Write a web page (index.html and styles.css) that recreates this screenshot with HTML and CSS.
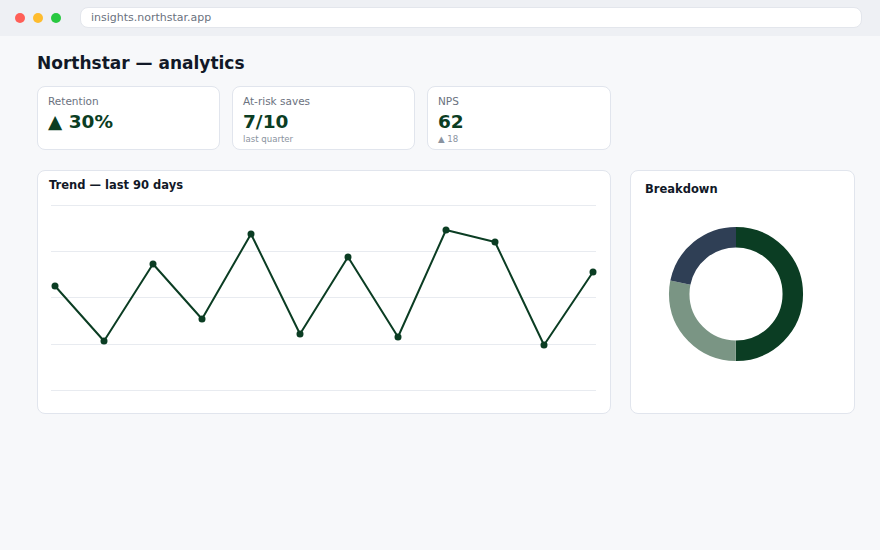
FILE: index.html
```html
<!DOCTYPE html>
<html lang="en">
<head>
    <meta charset="UTF-8">
    <title>Northstar — analytics</title>
    <link rel="stylesheet" href="styles.css">
</head>
<body>
    <div class="chrome">
        <span class="dot red"></span>
        <span class="dot amber"></span>
        <span class="dot green"></span>
        <div class="url">insights.northstar.app</div>
    </div>

    <div class="page">
        <h1>Northstar — analytics</h1>

        <div class="kpis">
            <div class="card kpi">
                <div class="label">Retention</div>
                <div class="value">▲ 30%</div>
            </div>
            <div class="card kpi">
                <div class="label">At-risk saves</div>
                <div class="value">7/10</div>
                <div class="sub">last quarter</div>
            </div>
            <div class="card kpi">
                <div class="label">NPS</div>
                <div class="value">62</div>
                <div class="sub">▲ 18</div>
            </div>
        </div>

        <div class="panels">
            <div class="card trend">
                <h3>Trend — last 90 days</h3>
                <svg class="chart" width="572" height="212" viewBox="0 0 572 212">
                    <g stroke="#e8ebf0" stroke-width="1">
                        <line x1="13" y1="12.5" x2="558" y2="12.5"/>
                        <line x1="13" y1="58.5" x2="558" y2="58.5"/>
                        <line x1="13" y1="104.5" x2="558" y2="104.5"/>
                        <line x1="13" y1="151.5" x2="558" y2="151.5"/>
                        <line x1="13" y1="197.5" x2="558" y2="197.5"/>
                    </g>
                    <polyline fill="none" stroke="#0b3d23" stroke-width="2" stroke-linejoin="round"
                        points="17,93 66,148 115,71 164,126 213,41 262,141 310,64 360,144 408,37 457,49 506,152 555,79"/>
                    <g fill="#0b3d23">
                        <circle cx="17" cy="93" r="3.5"/>
                        <circle cx="66" cy="148" r="3.5"/>
                        <circle cx="115" cy="71" r="3.5"/>
                        <circle cx="164" cy="126" r="3.5"/>
                        <circle cx="213" cy="41" r="3.5"/>
                        <circle cx="262" cy="141" r="3.5"/>
                        <circle cx="310" cy="64" r="3.5"/>
                        <circle cx="360" cy="144" r="3.5"/>
                        <circle cx="408" cy="37" r="3.5"/>
                        <circle cx="457" cy="49" r="3.5"/>
                        <circle cx="506" cy="152" r="3.5"/>
                        <circle cx="555" cy="79" r="3.5"/>
                    </g>
                </svg>
            </div>

            <div class="card breakdown">
                <h3>Breakdown</h3>
                <svg class="donut" width="182" height="182" viewBox="0 0 182 182">
                    <g transform="rotate(-90 91 91)" fill="none" stroke-width="20.5">
                        <circle cx="91" cy="91" r="56.8" stroke="#0b3d23" stroke-dasharray="178.44 356.88"/>
                        <circle cx="91" cy="91" r="56.8" stroke="#7a9584" stroke-dasharray="100.3 356.88" stroke-dashoffset="-178.44"/>
                        <circle cx="91" cy="91" r="56.8" stroke="#2f3f55" stroke-dasharray="78.14 356.88" stroke-dashoffset="-278.74"/>
                    </g>
                </svg>
            </div>
        </div>
    </div>
</body>
</html>
```

FILE: styles.css
```css
body {
    margin: 0;
    background: #f7f8fa;
    font-family: "DejaVu Sans", Verdana, sans-serif;
    color: #111827;
}
.chrome {
    height: 36px;
    background: #eef0f4;
    display: flex;
    align-items: center;
    padding: 0 18px 0 15px;
    box-sizing: border-box;
}
.dot {
    width: 10px;
    height: 10px;
    border-radius: 50%;
    margin-right: 8px;
}
.red { background: #ff5f57; }
.amber { background: #febc2e; }
.green { background: #28c840; }
.url {
    flex: 1;
    margin-left: 11px;
    height: 21px;
    margin-top: -1px;
    background: #fff;
    border: 1px solid #e3e6ec;
    border-radius: 8px;
    box-sizing: border-box;
    font-size: 11px;
    line-height: 19px;
    color: #6b7280;
    padding-left: 10px;
}
.page {
    padding: 16px 25px 0 37px;
}
h1 {
    margin: 0;
    font-size: 17px;
    line-height: 22px;
    font-weight: bold;
    color: #111827;
}
.card {
    background: #fff;
    border: 1px solid #e1e5ed;
    border-radius: 8px;
    box-sizing: border-box;
}
.kpis {
    display: grid;
    grid-template-columns: 183px 183px 184px;
    gap: 12px;
    margin-top: 12px;
}
.kpi {
    height: 64px;
    padding: 7px 10px 0;
}
.label {
    font-size: 10.5px;
    line-height: 14px;
    color: #6b7280;
}
.value {
    margin-top: 2px;
    font-size: 18.5px;
    line-height: 24px;
    font-weight: bold;
    color: #0b3d23;
}
.sub {
    font-size: 8.6px;
    line-height: 11px;
    color: #8a93a0;
}
.panels {
    display: grid;
    grid-template-columns: 574px 225px;
    gap: 19px;
    margin-top: 20px;
}
.trend, .breakdown {
    height: 244px;
}
.trend {
    padding-top: 7px;
}
h3 {
    margin: 0;
    font-size: 11.5px;
    line-height: 15px;
    font-weight: bold;
    color: #111827;
}
.trend h3 {
    padding-left: 11px;
}
.chart {
    display: block;
}
.breakdown {
    padding: 11px 14px 0;
}
.donut {
    display: block;
    margin-top: 6px;
}
```
